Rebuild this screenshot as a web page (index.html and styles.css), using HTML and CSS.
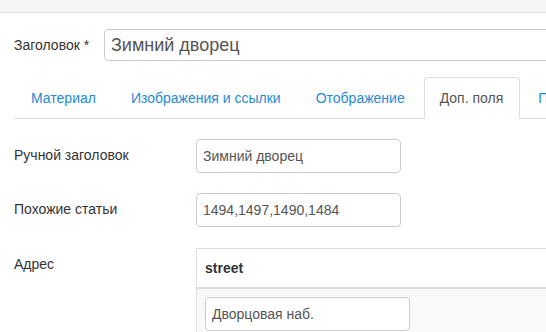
FILE: index.html
```html
<!DOCTYPE html>
<html lang="ru">
<head>
  <meta charset="UTF-8" />
  <title>Редактирование материала</title>
  <link rel="stylesheet" href="styles.css">
</head>
<body>
  <div class="topbar"></div>

  <div class="content">
    <div class="title-row">
      <label class="title-label">Заголовок *</label>
      <input type="text" class="title-input" value="Зимний дворец">
    </div>

    <ul class="tabs">
      <li><a href="#content">Материал</a></li>
      <li><a href="#images">Изображения и ссылки</a></li>
      <li><a href="#display">Отображение</a></li>
      <li class="active"><a href="#fields">Доп. поля</a></li>
      <li><a href="#publish">Публикация</a></li>
    </ul>

    <div class="form-row">
      <label class="control-label">Ручной заголовок</label>
      <input type="text" class="field" value="Зимний дворец">
    </div>

    <div class="form-row">
      <label class="control-label">Похожие статьи</label>
      <input type="text" class="field" value="1494,1497,1490,1484">
    </div>

    <div class="form-row">
      <label class="control-label">Адрес</label>
      <table class="subform">
        <thead>
          <tr><th>street</th></tr>
        </thead>
        <tbody>
          <tr><td><input type="text" class="field" value="Дворцовая наб."></td></tr>
        </tbody>
      </table>
    </div>
  </div>
</body>
</html>
```

FILE: styles.css
```css
body {
  margin: 0;
  font-family: "Liberation Sans", Arial, sans-serif;
  font-size: 14px;
  color: #333;
  background-color: #fff;
  overflow: hidden;
}

.topbar {
  height: 12px;
  background-color: #f5f5f5;
  border-bottom: 1px solid #ddd;
}

.content {
  width: 720px;
  padding-left: 14px;
}

.title-row {
  display: flex;
  align-items: center;
  margin-top: 16px;
}

.title-label {
  width: 90px;
}

.title-input {
  flex: 1;
  box-sizing: border-box;
  height: 32px;
  padding: 0 6px;
  font-family: inherit;
  font-size: 18px;
  color: #555;
  border: 1px solid #ccc;
  border-radius: 4px;
}

.tabs {
  list-style: none;
  display: flex;
  margin: 16px 0 0;
  padding: 0;
  border-bottom: 1px solid #ddd;
}

.tabs li {
  margin-right: 2px;
  margin-bottom: -1px;
}

.tabs a {
  display: block;
  padding: 10px 16px 10px 15px;
  line-height: 20px;
  color: #1f8ad6;
  text-decoration: none;
  border: 1px solid transparent;
  border-radius: 4px 4px 0 0;
}

.tabs li:first-child a {
  padding-left: 16px;
}

.tabs .active a {
  color: #555;
  background-color: #fff;
  border-color: #ddd;
  border-bottom-color: #fff;
}

.form-row {
  display: flex;
  align-items: flex-start;
  margin-top: 20px;
}

.form-row:last-child {
  margin-top: 21px;
}

.control-label {
  width: 182px;
  padding-top: 6px;
  line-height: 20px;
}

.field {
  box-sizing: border-box;
  width: 205px;
  height: 34px;
  padding: 0 6px;
  font-family: inherit;
  font-size: 14px;
  color: #555;
  border: 1px solid #ccc;
  border-radius: 4px;
  background-color: #fff;
}

.subform {
  flex: 1;
  border-collapse: collapse;
  border: 1px solid #ddd;
}

.subform th {
  text-align: left;
  padding: 9px 8px;
  line-height: 20px;
  border-bottom: 2px solid #ddd;
}

.subform td {
  padding: 8px;
  background-color: #f9f9f9;
}

.subform td .field {
  display: block;
}
```
